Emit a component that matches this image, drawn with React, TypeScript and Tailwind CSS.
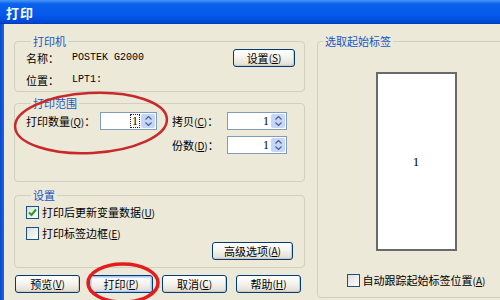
import type { ReactNode } from 'react';

const cjk = "font-['Noto_Sans_CJK_SC','Liberation_Sans',sans-serif]";

function Group({ title, className, children }: { title: string; className?: string; children: ReactNode }) {
  return (
    <fieldset className={`shrink-0 min-w-0 border border-[#d0d0bf] rounded-[4px] ${className ?? ''}`}>
      <legend className="ml-[5px] px-[2px] text-[11px] leading-[12px] text-[#1b55c4] whitespace-nowrap">{title}</legend>
      {children}
    </fieldset>
  );
}

function Key({ k }: { k: string }) {
  return (
    <span className="text-[10px]">
      (<span className="underline">{k}</span>)
    </span>
  );
}

function Btn({ children, className, focused }: { children: ReactNode; className?: string; focused?: boolean }) {
  return (
    <div
      className={`shrink-0 h-[18px] flex items-center justify-center whitespace-nowrap rounded-[3px] border border-[#003c74] bg-[linear-gradient(180deg,#ffffff_0%,#f5f4ef_45%,#e6e3d8_85%,#d6d0c5_100%)] text-[11px] leading-[12px] text-black ${
        focused ? 'shadow-[inset_0_0_0_1px_#a8c4f4,inset_0_0_0_2px_#cfdcf8]' : 'shadow-[inset_-1px_-1px_0_#d0cbbe]'
      } ${className ?? ''}`}
    >
      {children}
    </div>
  );
}

function Spin({ value, width, selected }: { value: string; width: string; selected?: boolean }) {
  return (
    <div className={`shrink-0 h-[18px] ${width} flex items-stretch border border-[#7f9db9] bg-white`}>
      <div className="flex-1 flex items-center justify-end pr-[2px] font-['Liberation_Serif',serif] text-[12px] leading-[12px]">
        <span className={selected ? 'outline outline-1 outline-dotted outline-[#222] px-[1px]' : ''}>{value}</span>
      </div>
      <div className="w-[14px] my-[1px] mr-[1px] rounded-[2px] bg-[#c6d6fb] flex flex-col items-center justify-center gap-[2px]">
        <svg width="7" height="4" viewBox="0 0 7 4">
          <path d="M0.5 3.5 L3.5 0.5 L6.5 3.5" fill="none" stroke="#4d6185" strokeWidth="1.2" />
        </svg>
        <svg width="7" height="4" viewBox="0 0 7 4">
          <path d="M0.5 0.5 L3.5 3.5 L6.5 0.5" fill="none" stroke="#4d6185" strokeWidth="1.2" />
        </svg>
      </div>
    </div>
  );
}

function Check({ checked, children }: { checked?: boolean; children: ReactNode }) {
  return (
    <div className="h-[16px] flex items-center gap-[3px] whitespace-nowrap">
      <div className="shrink-0 w-[13px] h-[13px] border border-[#1c5180] bg-[linear-gradient(135deg,#dcdcd7_0%,#ffffff_100%)] flex items-center justify-center">
        {checked && (
          <svg width="9" height="9" viewBox="0 0 9 9">
            <path d="M1 4.5 L3.5 7 L8 1.5" fill="none" stroke="#21a121" strokeWidth="2" />
          </svg>
        )}
      </div>
      <span className="text-[11px] leading-[12px]">{children}</span>
    </div>
  );
}

export default function App() {
  return (
    <div className={`relative w-[500px] h-[300px] overflow-hidden flex flex-col bg-[#ece9d8] text-black ${cjk}`}>
      {/* title bar */}
      <div className="h-[24px] shrink-0 flex items-center pl-[6px] bg-[linear-gradient(180deg,#4a97f8_0%,#0a62ec_16%,#0558ea_65%,#0048d6_92%,#0038b8_100%)]">
        <span className="text-white font-bold text-[13px] leading-[13px] tracking-[1px]">打印</span>
      </div>

      <div className="flex-1 flex">
        <div className="shrink-0 w-[4px] bg-[linear-gradient(90deg,#0848c8,#1a66ee)]" />

        <div className="flex-1 flex gap-[12px] pl-[10px] pt-[11px]">
          {/* left column */}
          <div className="shrink-0 w-[291px] flex flex-col">
            <Group title="打印机" className="pl-[11px] pr-[9px] pt-[2px] pb-[2px]">
              <div className="flex justify-between">
                <div className="flex flex-col gap-[4px] text-[11px] leading-[12px] whitespace-nowrap">
                  <div className="h-[18px] flex items-center">
                    <span className="w-[46px] shrink-0">名称：</span>
                    <span className="font-['Liberation_Mono',monospace] text-[10px]">POSTEK G2000</span>
                  </div>
                  <div className="h-[18px] flex items-center">
                    <span className="w-[46px] shrink-0">位置：</span>
                    <span className="font-['Liberation_Mono',monospace] text-[10px]">LPT1:</span>
                  </div>
                </div>
                <Btn className="w-[62px]">
                  设置<Key k="S" />
                </Btn>
              </div>
            </Group>

            <Group title="打印范围" className="mt-[5px] pl-[11px] pt-[3px] pb-[27px]">
              <div className="flex text-[11px] leading-[12px] whitespace-nowrap">
                <div className="h-[18px] flex items-center">
                  <span className="w-[74px] shrink-0">
                    打印数量<Key k="Q" />：
                  </span>
                  <Spin value="1" width="w-[57px]" selected />
                </div>
                <div className="ml-[15px] flex flex-col gap-[6px]">
                  <div className="h-[18px] flex items-center">
                    <span className="w-[55px] shrink-0">
                      拷贝<Key k="C" />：
                    </span>
                    <Spin value="1" width="w-[60px]" />
                  </div>
                  <div className="h-[18px] flex items-center">
                    <span className="w-[55px] shrink-0">
                      份数<Key k="D" />：
                    </span>
                    <Spin value="1" width="w-[60px]" />
                  </div>
                </div>
              </div>
            </Group>

            <Group title="设置" className="mt-[7px] pl-[11px] pr-[11px] pt-[3px] pb-[7px]">
              <div className="flex flex-col gap-[5px]">
                <Check checked>
                  打印后更新变量数据<Key k="U" />
                </Check>
                <Check>
                  打印标签边框<Key k="E" />
                </Check>
              </div>
              <div className="flex justify-end mt-[1px]">
                <Btn className="w-[81px]">
                  高级选项<Key k="A" />
                </Btn>
              </div>
            </Group>

            <div className="mt-[7px] ml-[1px] flex gap-[9px]">
              <Btn className="w-[65px]">
                预览<Key k="V" />
              </Btn>
              <Btn className="w-[64px]" focused>
                打印<Key k="P" />
              </Btn>
              <Btn className="w-[65px]">
                取消<Key k="C" />
              </Btn>
              <Btn className="w-[65px]">
                帮助<Key k="H" />
              </Btn>
            </div>
          </div>

          {/* right column */}
          <Group title="选取起始标签" className="w-[198px] h-[263px] flex flex-col items-center">
            <div className="mt-[25px] w-[81px] h-[179px] border-2 border-[#6a6a6a] bg-white flex items-center justify-center">
              <span className="font-['Liberation_Serif',serif] text-[13px]">1</span>
            </div>
            <div className="mt-[21px]">
              <Check>
                自动跟踪起始标签位置<Key k="A" />
              </Check>
            </div>
          </Group>
        </div>
      </div>

      {/* red annotation circles */}
      <svg className="absolute inset-0 pointer-events-none" width="500" height="300" viewBox="0 0 500 300">
        <ellipse cx="91" cy="123" rx="76" ry="30" fill="none" stroke="#c62a2a" strokeWidth="2.5" transform="rotate(-3 91 123)" />
        <ellipse cx="123" cy="283" rx="35" ry="19" fill="none" stroke="#e41c1c" strokeWidth="3.5" />
      </svg>
    </div>
  );
}
